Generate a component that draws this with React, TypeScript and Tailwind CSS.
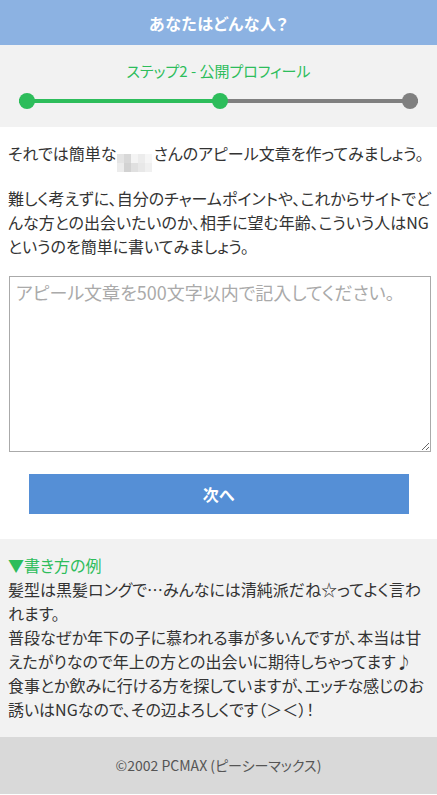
import React from "react";

const font = { fontFamily: '"Noto Sans CJK JP", "Noto Sans", sans-serif' };

function Mosaic() {
  const cells = [
    ["#e4e4e4", "#d8d8d8", "#f4f4f4", "#ececec", "#f6f6f6"],
    ["#ececec", "#d2d2d2", "#e0e0e0", "#e8e8e8", "#f0f0f0"],
  ];
  return (
    <span className="inline-flex flex-col align-[-3px] mx-[1px] h-[18px] leading-none">
      {cells.map((row, i) => (
        <span key={i} className="flex">
          {row.map((c, j) => (
            <span key={j} className="block w-[7px] h-[9px]" style={{ background: c }} />
          ))}
        </span>
      ))}
    </span>
  );
}

export default function App() {
  return (
    <div className="w-[437px] min-h-[795px] bg-white text-[#333] [font-feature-settings:'palt']" style={font}>
      <header className="h-[45px] bg-[#8cb2e2] flex items-center justify-center">
        <h1 className="text-white text-[16px] font-bold tracking-[0.5px]">あなたはどんな人？</h1>
      </header>

      <section className="bg-[#f2f2f2] h-[82px] pt-[15px]">
        <p className="text-center text-[#2dbd5b] text-[15px] leading-[22px]">ステップ2 - 公開プロフィール</p>
        <div className="relative mx-[19px] mt-[11px] h-[16px] flex items-center">
          <div className="flex-1 h-[4px] bg-[#2dbd5b]" />
          <div className="flex-1 h-[4px] bg-[#808080]" />
          <div className="absolute left-0 top-0 w-[16px] h-[16px] rounded-full bg-[#2dbd5b]" />
          <div className="absolute left-[193px] top-0 w-[16px] h-[16px] rounded-full bg-[#2dbd5b]" />
          <div className="absolute right-0 top-0 w-[16px] h-[16px] rounded-full bg-[#808080]" />
        </div>
      </section>

      <section className="px-[8px] pt-[14px] text-[16px] leading-[24px]">
        <p className="whitespace-nowrap h-[24px]">
          それでは簡単な<Mosaic />さんのアピール文章を作ってみましょう。
        </p>
        <p className="mt-[21px]">
          <span className="block whitespace-nowrap">難しく考えずに、自分のチャームポイントや、これからサイトでど</span>
          <span className="block whitespace-nowrap">んな方との出会いたいのか、相手に望む年齢、こういう人はNG</span>
          <span className="block whitespace-nowrap">というのを簡単に書いてみましょう。</span>
        </p>
        <div className="mt-[18px] pl-[1px]">
          <textarea
            className="block w-[422px] h-[176px] border border-[#aaaaaa] bg-white px-[6px] py-[2px] text-[18px] leading-[26px] placeholder:text-[#aaaaaa] outline-none resize-y"
            style={font}
            placeholder="アピール文章を500文字以内で記入してください。"
          />
        </div>
        <div className="flex justify-center pt-[22px] pb-[25px]">
          <button className="w-[380px] h-[40px] bg-[#558fd6] text-white text-[16px] font-bold">次へ</button>
        </div>
      </section>

      <section className="bg-[#f2f2f2] px-[8px] pt-[14px] pb-[16px] text-[16px] leading-[24px] h-[198px]">
        <p className="text-[#2dbd5b]">▼書き方の例</p>
        <p className="whitespace-nowrap">髪型は黒髪ロングで…みんなには清純派だね☆ってよく言わ</p>
        <p className="whitespace-nowrap">れます。</p>
        <p className="whitespace-nowrap">普段なぜか年下の子に慕われる事が多いんですが、本当は甘</p>
        <p className="whitespace-nowrap">えたがりなので年上の方との出会いに期待しちゃってます♪</p>
        <p className="whitespace-nowrap">食事とか飲みに行ける方を探していますが、エッチな感じのお</p>
        <p className="whitespace-nowrap">誘いはNGなので、その辺よろしくです（＞＜）！</p>
      </section>

      <footer className="bg-[#d9d9d9] h-[57px] flex items-center justify-center">
        <p className="text-[14px] text-[#555]">©2002 PCMAX (ピーシーマックス)</p>
      </footer>
    </div>
  );
}
